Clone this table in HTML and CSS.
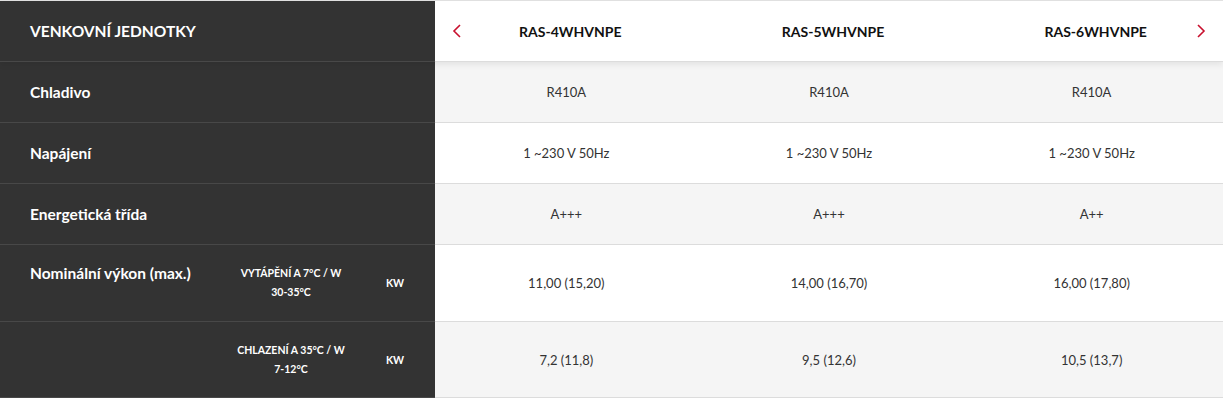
FILE: index.html
```html
<!DOCTYPE html>
<html lang="cs">
<head>
<meta charset="utf-8">
<title>Venkovní jednotky</title>
<link rel="stylesheet" href="styles.css">
</head>
<body>
<div class="spec">
  <div class="row head">
    <div class="label-cell"><span class="main-label title">VENKOVNÍ JEDNOTKY</span></div>
    <div class="val model">
      <button class="nav prev" aria-label="Předchozí"><svg width="10" height="14" viewBox="0 0 10 14"><path d="M8 1 L2 7 L8 13" fill="none" stroke="#c8102e" stroke-width="1.6"/></svg></button>
      RAS-4WHVNPE
    </div>
    <div class="val model">RAS-5WHVNPE</div>
    <div class="val model">
      RAS-6WHVNPE
      <button class="nav next" aria-label="Další"><svg width="10" height="14" viewBox="0 0 10 14"><path d="M2 1 L8 7 L2 13" fill="none" stroke="#c8102e" stroke-width="1.6"/></svg></button>
    </div>
  </div>
  <div class="row gray">
    <div class="label-cell"><span class="main-label">Chladivo</span></div>
    <div class="val">R410A</div>
    <div class="val">R410A</div>
    <div class="val">R410A</div>
  </div>
  <div class="row">
    <div class="label-cell"><span class="main-label">Napájení</span></div>
    <div class="val">1 ~230 V 50Hz</div>
    <div class="val">1 ~230 V 50Hz</div>
    <div class="val">1 ~230 V 50Hz</div>
  </div>
  <div class="row gray">
    <div class="label-cell"><span class="main-label">Energetická třída</span></div>
    <div class="val">A+++</div>
    <div class="val">A+++</div>
    <div class="val">A++</div>
  </div>
  <div class="row tall">
    <div class="label-cell split">
      <span class="main-label">Nominální výkon (max.)</span>
      <span class="sub">VYTÁPĚNÍ A 7°C / W<br>30-35°C</span>
      <span class="unit">KW</span>
    </div>
    <div class="val">11,00 (15,20)</div>
    <div class="val">14,00 (16,70)</div>
    <div class="val">16,00 (17,80)</div>
  </div>
  <div class="row tall gray last">
    <div class="label-cell split">
      <span class="main-label"></span>
      <span class="sub">CHLAZENÍ A 35°C / W<br>7-12°C</span>
      <span class="unit">KW</span>
    </div>
    <div class="val">7,2 (11,8)</div>
    <div class="val">9,5 (12,6)</div>
    <div class="val">10,5 (13,7)</div>
  </div>
</div>
</body>
</html>
```

FILE: styles.css
```css
* { box-sizing: border-box; }
html, body { margin: 0; padding: 0; background: #fff; }
body { font-family: Lato, "Open Sans", sans-serif; color: #333; }

.spec {
  width: 1223px;
  border-top: 1px solid #e2e2e2;
  display: flex;
  flex-direction: column;
}

.row {
  display: grid;
  grid-template-columns: 435px 1fr 1fr 1fr;
  height: 61px;
  background: #fff;
}
.row.gray { background: #f5f5f5; }
.row.tall { height: 77px; }
.row.last { height: 76px; }

.row.head {
  height: 61px;
  position: relative;
  z-index: 1;
  box-shadow: 0 3px 6px rgba(0, 0, 0, 0.07);
}

.label-cell {
  background: #333;
  color: #fff;
  display: flex;
  align-items: center;
  padding-left: 30px;
  border-bottom: 1px solid #484848;
}

.main-label {
  font-weight: 700;
  font-size: 15.5px;
  line-height: 19px;
}
.main-label.title { font-size: 15.5px; }

.label-cell.split {
  align-items: flex-start;
  padding-top: 19px;
}
.split .main-label { width: 196px; }
.split .sub {
  width: 130px;
  text-align: center;
  font-size: 10.5px;
  font-weight: 700;
  line-height: 19px;
}
.split .unit {
  width: 50px;
  text-align: center;
  font-size: 10.5px;
  font-weight: 700;
  line-height: 38px;
  margin-left: 14px;
}

.val {
  display: flex;
  align-items: center;
  justify-content: center;
  font-size: 13px;
  color: #333;
  border-bottom: 1px solid #dcdcdc;
}

.val.model {
  position: relative;
  font-size: 14px;
  font-weight: 700;
  color: #111;
  padding-left: 8px;
}

.nav {
  position: absolute;
  top: 23px;
  background: none;
  border: 0;
  padding: 0;
  width: 10px;
  height: 14px;
  cursor: pointer;
  display: block;
}
.nav svg { display: block; }
.nav.prev { left: 17px; }
.nav.next { right: 17px; }
```
